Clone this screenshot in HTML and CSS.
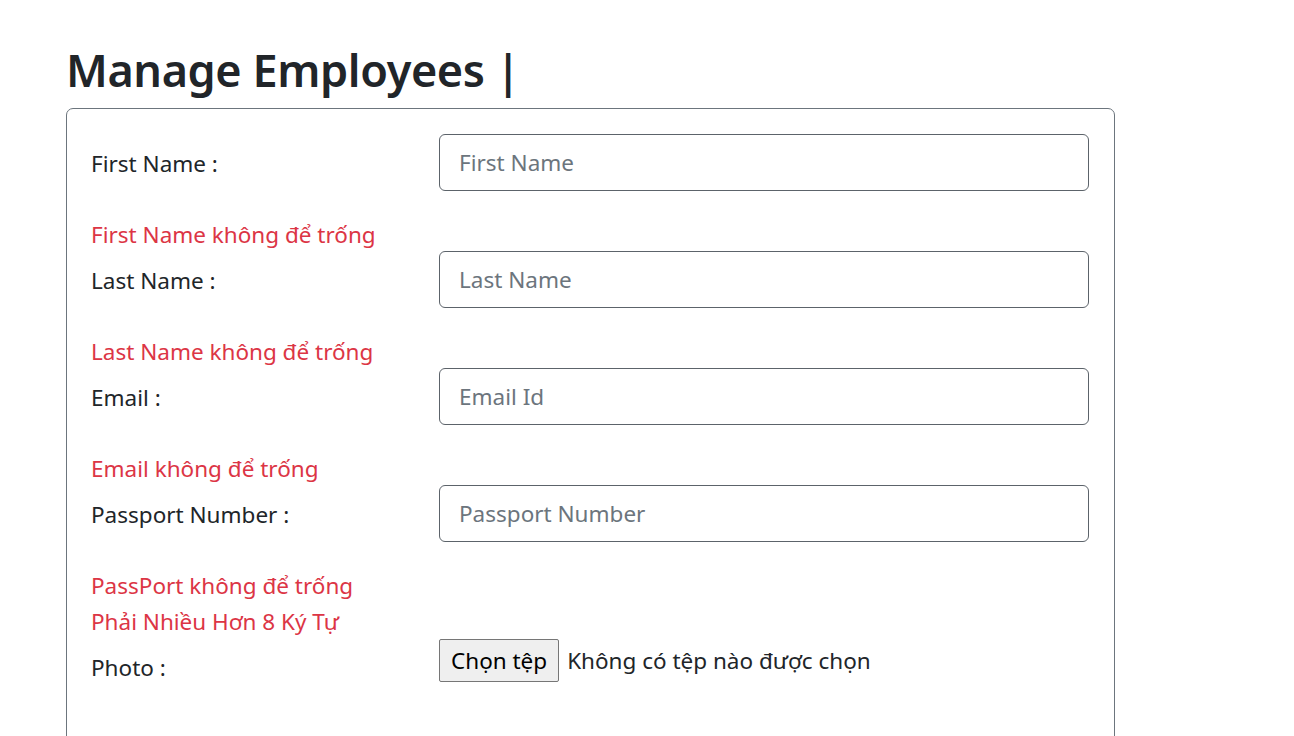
FILE: index.html
```html
<!DOCTYPE html>
<html lang="vi">
<head>
<meta charset="utf-8">
<title>Manage Employees</title>
<link rel="stylesheet" href="styles.css">
</head>
<body>
<div class="container">
  <h1 class="title">Manage Employees |</h1>
  <form class="card">
    <div class="row">
      <label class="label">First Name :</label>
      <input class="field" type="text" placeholder="First Name">
    </div>
    <div class="error">First Name không để trống</div>
    <div class="row">
      <label class="label">Last Name :</label>
      <input class="field" type="text" placeholder="Last Name">
    </div>
    <div class="error">Last Name không để trống</div>
    <div class="row">
      <label class="label">Email :</label>
      <input class="field" type="text" placeholder="Email Id">
    </div>
    <div class="error">Email không để trống</div>
    <div class="row">
      <label class="label">Passport Number :</label>
      <input class="field" type="text" placeholder="Passport Number">
    </div>
    <div class="error">PassPort không để trống</div>
    <div class="error">Phải Nhiều Hơn 8 Ký Tự</div>
    <div class="row">
      <label class="label">Photo :</label>
      <div class="file">
        <button type="button" class="file-btn">Chọn tệp</button>
        <span class="file-name">Không có tệp nào được chọn</span>
      </div>
    </div>
  </form>
</div>
</body>
</html>
```

FILE: styles.css
```css
* { box-sizing: border-box; }
html, body { margin: 0; padding: 0; background: #fff; }
body {
  font-family: "Noto Sans", "Open Sans", sans-serif;
  color: #212529;
  font-size: 22.5px;
  line-height: 36px;
}
.container {
  padding: 41px 0 0 66px;
}
.title {
  margin: 0 0 9.6px 0;
  font-size: 45px;
  line-height: 57.6px;
  font-weight: 600;
  letter-spacing: -0.4px;
  color: #212529;
}
.card {
  width: 1049px;
  border: 1px solid #6c757d;
  border-radius: 7px;
  padding: 25px 24px 120px 24px;
}
.row {
  display: grid;
  grid-template-columns: 348px 650px;
  align-items: start;
}
.label {
  padding-top: 12px;
  line-height: 36px;
}
.field {
  height: 57px;
  width: 650px;
  padding: 9.5px 19px;
  font: inherit;
  line-height: 36px;
  color: #212529;
  border: 1px solid #5c636a;
  border-radius: 6px;
  outline: none;
}
.field::placeholder { color: #6c757d; }
.error {
  color: #dc3545;
  line-height: 36px;
  padding-top: 2px;
  margin-bottom: -2px;
}
.row + .error { margin-top: 24px; }
.file {
  display: flex;
  align-items: center;
  gap: 8px;
  padding-top: 1px;
}
.file-btn {
  font: inherit;
  line-height: 34px;
  height: 43px;
  padding: 0 11px;
  color: #000;
  background: #efefef;
  border: 1px solid #767676;
  border-radius: 2px;
}
.file-name { color: #212529; }
```
